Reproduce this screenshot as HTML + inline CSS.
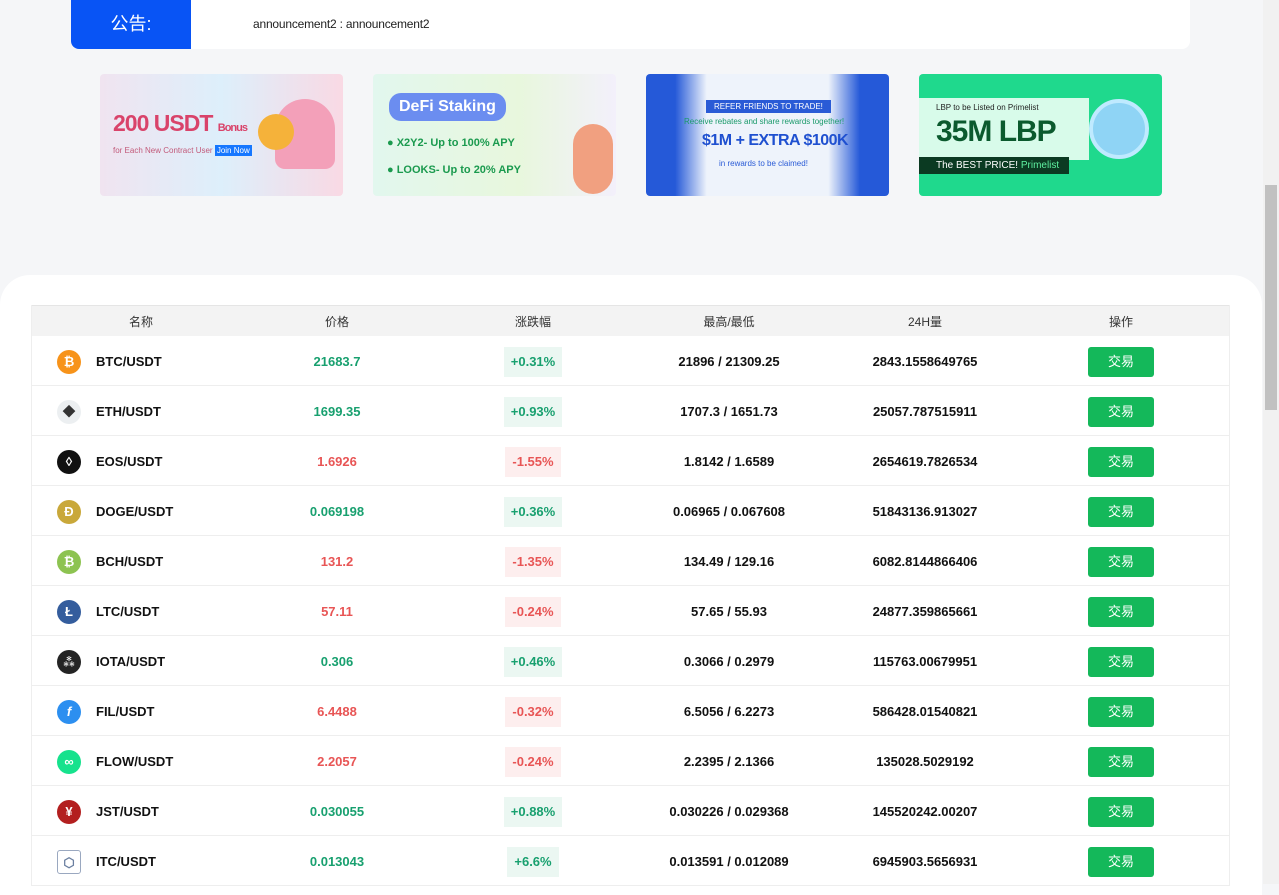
<!DOCTYPE html>
<html><head><meta charset="utf-8"><style>
*{margin:0;padding:0;box-sizing:border-box}
body{width:1279px;height:884px;overflow:hidden;background:#f5f6f8;font-family:"Liberation Sans","Noto Sans CJK SC",sans-serif;position:relative}
.ann{position:absolute;left:71px;top:0;width:1119px;height:49px;background:#fff;border-radius:0 0 8px 8px}
.ann .l{position:absolute;left:0;top:0;width:120px;height:49px;background:#0854f5;color:#fff;font-size:18px;line-height:49px;text-align:center;border-radius:0 0 0 8px}
.ann .t{position:absolute;left:182px;top:17px;font-size:12px;color:#222;letter-spacing:-0.2px}
.b{position:absolute;top:74px;width:243px;height:122px;border-radius:4px;overflow:hidden}
.card{position:absolute;left:0;top:275px;width:1262px;height:620px;background:#fff;border-radius:30px 30px 0 0}
.sb{position:absolute;left:1263px;top:0;width:16px;height:884px;background:#f1f1f1}
.sb i{position:absolute;left:2px;top:185px;width:12px;height:225px;background:#c1c1c1}
.tbl{position:absolute;left:31px;top:305px;width:1199px;border-left:1px solid #eee;border-right:1px solid #eee}
.row{display:flex;height:50px;align-items:center;border-bottom:1px solid #eee;padding-left:11px;padding-top:2px;font-size:13px;font-weight:bold;color:#111}
.hd{height:31px;background:#f3f3f3;font-weight:normal;font-size:12px;color:#333;border-top:1px solid #e5e5e5;border-bottom:none;padding-top:0}
.c{width:196px;text-align:center}
.nm{width:196px;display:flex;align-items:center;padding-left:14px}
.ic{width:24px;height:24px;border-radius:50%;margin-right:15px;color:#fff;font-size:13px;text-align:center;line-height:24px;font-weight:bold}
.g{color:#18a06f}.r{color:#e85555}
.ch{display:inline-block;padding:0 7px;height:30px;line-height:30px}
.cg{background:#ebf7f2;color:#18a06f}.cr{background:#fdeeee;color:#e85555}
.btn{display:inline-block;width:66px;height:30px;line-height:30px;background:#14b85a;color:#fff;border-radius:3px;font-weight:normal;font-size:13px}
</style></head><body>
<div class="ann"><div class="l">公告:</div><div class="t">announcement2 : announcement2</div></div>

<div class="b" style="left:100px;background:linear-gradient(90deg,#f0e4f0,#ddeffb 50%,#f9d9e4)">
<div style="position:absolute;left:13px;top:36px;font-size:23px;font-weight:bold;color:#d9436a;letter-spacing:-1px">200 USDT <span style="font-size:11px">Bonus</span></div>
<div style="position:absolute;left:13px;top:72px;font-size:8px;color:#c25a7a">for Each New Contract User <span style="background:#1677ff;color:#fff;padding:1px 2px">Join Now</span></div>
<div style="position:absolute;left:175px;top:25px;width:60px;height:70px;background:#f3a0b9;border-radius:30px 30px 10px 10px"></div>
<div style="position:absolute;left:158px;top:40px;width:36px;height:36px;background:#f5b23a;border-radius:50%"></div>
</div>
<div class="b" style="left:373px;background:linear-gradient(90deg,#e2f7ee,#e8f7dd 60%,#f3f0fb)">
<div style="position:absolute;left:16px;top:19px;background:#6b8df0;color:#fff;font-weight:bold;font-size:16px;padding:5px 10px;border-radius:12px">DeFi Staking</div>
<div style="position:absolute;left:14px;top:63px;font-size:11px;font-weight:bold;color:#1a9a4e">● X2Y2- Up to 100% APY</div>
<div style="position:absolute;left:14px;top:90px;font-size:11px;font-weight:bold;color:#1a9a4e">● LOOKS- Up to 20% APY</div>
<div style="position:absolute;left:200px;top:50px;width:40px;height:70px;background:#f1a080;border-radius:20px"></div>
</div>
<div class="b" style="left:646px;background:linear-gradient(90deg,#2559d8 0,#2559d8 12%,#eef3fb 25%,#eef3fb 75%,#2559d8 88%)">
<div style="position:absolute;left:60px;top:26px;background:#2a5bd6;color:#fff;font-size:8px;padding:2px 8px">REFER FRIENDS TO TRADE!</div>
<div style="position:absolute;left:38px;top:43px;font-size:8px;color:#1a9a6a">Receive rebates and share rewards together!</div>
<div style="position:absolute;left:56px;top:58px;font-size:16px;font-weight:bold;color:#1f50d0;letter-spacing:-0.5px">$1M + EXTRA $100K</div>
<div style="position:absolute;left:73px;top:85px;font-size:8px;color:#2a5bd6">in rewards to be claimed!</div>
</div>
<div class="b" style="left:919px;background:#1fd98d">
<div style="position:absolute;left:0;top:24px;width:170px;height:62px;background:#d8fbea"></div>
<div style="position:absolute;left:17px;top:29px;font-size:8px;color:#222">LBP to be Listed on Primelist</div>
<div style="position:absolute;left:17px;top:41px;font-size:30px;font-weight:bold;color:#0b5a2e;letter-spacing:-1px">35M LBP</div>
<div style="position:absolute;left:0;top:83px;width:150px;height:17px;background:#0b3a22;color:#fff;font-size:10px;padding-left:17px;line-height:17px">The BEST PRICE! <span style="color:#5ef0a0">Primelist</span></div>
<div style="position:absolute;left:170px;top:25px;width:60px;height:60px;border-radius:50%;background:#8fd4f5;border:4px solid #bfeaff"></div>
</div>

<div class="card"></div>
<div class="tbl">
<div class="row hd"><div class="c">名称</div><div class="c">价格</div><div class="c">涨跌幅</div><div class="c">最高/最低</div><div class="c">24H量</div><div class="c">操作</div></div>
<div class="row"><div class="nm"><span class="ic" style="background:#f7931a">₿</span>BTC/USDT</div><div class="c g">21683.7</div><div class="c"><span class="ch cg">+0.31%</span></div><div class="c">21896 / 21309.25</div><div class="c">2843.1558649765</div><div class="c"><span class="btn">交易</span></div></div>
<div class="row"><div class="nm"><span class="ic" style="background:#eceff1;color:#333">◆</span>ETH/USDT</div><div class="c g">1699.35</div><div class="c"><span class="ch cg">+0.93%</span></div><div class="c">1707.3 / 1651.73</div><div class="c">25057.787515911</div><div class="c"><span class="btn">交易</span></div></div>
<div class="row"><div class="nm"><span class="ic" style="background:#111">◊</span>EOS/USDT</div><div class="c r">1.6926</div><div class="c"><span class="ch cr">-1.55%</span></div><div class="c">1.8142 / 1.6589</div><div class="c">2654619.7826534</div><div class="c"><span class="btn">交易</span></div></div>
<div class="row"><div class="nm"><span class="ic" style="background:#c9a83a">Ð</span>DOGE/USDT</div><div class="c g">0.069198</div><div class="c"><span class="ch cg">+0.36%</span></div><div class="c">0.06965 / 0.067608</div><div class="c">51843136.913027</div><div class="c"><span class="btn">交易</span></div></div>
<div class="row"><div class="nm"><span class="ic" style="background:#8dc351">₿</span>BCH/USDT</div><div class="c r">131.2</div><div class="c"><span class="ch cr">-1.35%</span></div><div class="c">134.49 / 129.16</div><div class="c">6082.8144866406</div><div class="c"><span class="btn">交易</span></div></div>
<div class="row"><div class="nm"><span class="ic" style="background:#345d9d">Ł</span>LTC/USDT</div><div class="c r">57.11</div><div class="c"><span class="ch cr">-0.24%</span></div><div class="c">57.65 / 55.93</div><div class="c">24877.359865661</div><div class="c"><span class="btn">交易</span></div></div>
<div class="row"><div class="nm"><span class="ic" style="background:#242424">⁂</span>IOTA/USDT</div><div class="c g">0.306</div><div class="c"><span class="ch cg">+0.46%</span></div><div class="c">0.3066 / 0.2979</div><div class="c">115763.00679951</div><div class="c"><span class="btn">交易</span></div></div>
<div class="row"><div class="nm"><span class="ic" style="background:#2c8ff0"><i>f</i></span>FIL/USDT</div><div class="c r">6.4488</div><div class="c"><span class="ch cr">-0.32%</span></div><div class="c">6.5056 / 6.2273</div><div class="c">586428.01540821</div><div class="c"><span class="btn">交易</span></div></div>
<div class="row"><div class="nm"><span class="ic" style="background:#16e28d">∞</span>FLOW/USDT</div><div class="c r">2.2057</div><div class="c"><span class="ch cr">-0.24%</span></div><div class="c">2.2395 / 2.1366</div><div class="c">135028.5029192</div><div class="c"><span class="btn">交易</span></div></div>
<div class="row"><div class="nm"><span class="ic" style="background:#b31f1f">¥</span>JST/USDT</div><div class="c g">0.030055</div><div class="c"><span class="ch cg">+0.88%</span></div><div class="c">0.030226 / 0.029368</div><div class="c">145520242.00207</div><div class="c"><span class="btn">交易</span></div></div>
<div class="row"><div class="nm"><span class="ic" style="background:#fff;color:#6a7fa0;border:1px solid #9aa8c0;border-radius:3px">⬡</span>ITC/USDT</div><div class="c g">0.013043</div><div class="c"><span class="ch cg">+6.6%</span></div><div class="c">0.013591 / 0.012089</div><div class="c">6945903.5656931</div><div class="c"><span class="btn">交易</span></div></div>
</div>
<div class="sb"><i></i></div>
</body></html>
